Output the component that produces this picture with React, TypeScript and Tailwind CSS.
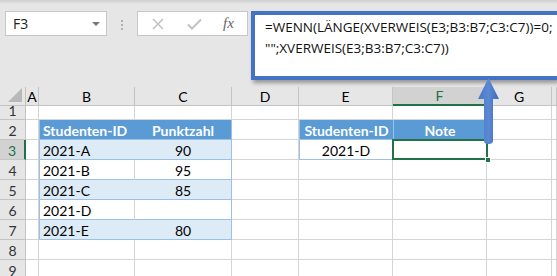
import React from "react";

const cols = ["A", "B", "C", "D", "E", "F", "G", ""];

type CellProps = {
  children?: React.ReactNode;
  className?: string;
};

function Cell({ children, className = "" }: CellProps) {
  return (
    <div className={`flex items-end overflow-hidden whitespace-nowrap pb-[1px] text-[14px] leading-none text-black ${className}`}>
      {children}
    </div>
  );
}

const grid = "border-r border-b border-[#d4d4d4] bg-white";
const band = "border-b border-[#9bc2e6] bg-[#ddebf7]";
const plain = "border-b border-[#9bc2e6] bg-white";
const head = "border-b border-[#9bc2e6] bg-[#5b9bd5] font-bold text-white";

function RowHead({ n, active }: { n: number; active?: boolean }) {
  return (
    <div
      className={`flex items-end justify-center border-b pb-[1px] text-[14px] leading-none ${
        active
          ? "border-r-2 border-b-[#c4c4c4] border-r-[#217346] bg-[#d2d2d2] text-[#217346]"
          : "border-r border-[#c4c4c4] bg-[#e6e6e6] text-[#333]"
      }`}
    >
      {n}
    </div>
  );
}

export default function App() {
  return (
    <div
      className="relative h-[276px] w-[557px] overflow-hidden bg-[#e6e6e6]"
      style={{ fontFamily: "Lato, 'Open Sans', sans-serif" }}
    >
      {/* toolbar */}
      <div className="h-[4px] bg-gradient-to-b from-[#cfcfcf] to-[#e6e6e6]" />
      <div className="flex h-[83px] items-start pl-[5px] pt-[7px]" style={{ fontFamily: "'Open Sans', sans-serif" }}>
        <div className="flex h-[25px] w-[102px] items-center justify-between border border-[#c6c6c6] bg-white pl-[7px] pr-[6px] text-[14px] text-[#222]">
          <span>F3</span>
          <span className="h-0 w-0 border-x-[4px] border-t-[4px] border-x-transparent border-t-[#777]" />
        </div>
        <div className="ml-[14px] mr-[14px] mt-[9px] flex flex-col gap-[2px]">
          <span className="h-[2px] w-[2px] bg-[#b0b0b0]" />
          <span className="h-[2px] w-[2px] bg-[#b0b0b0]" />
          <span className="h-[2px] w-[2px] bg-[#b0b0b0]" />
        </div>
        <div className="flex h-[25px] w-[111px] items-center border border-[#c6c6c6] bg-white">
          <svg className="ml-[14px]" width="12" height="12" viewBox="0 0 12 12">
            <path d="M1 1 L11 11 M11 1 L1 11" stroke="#c2c2c2" strokeWidth="1.6" />
          </svg>
          <svg className="ml-[23px]" width="15" height="12" viewBox="0 0 15 12">
            <path d="M1 6.5 L5 10.5 L14 1.5" stroke="#c2c2c2" strokeWidth="2" fill="none" />
          </svg>
          <span
            className="ml-[21px] text-[15px] italic text-[#666]"
            style={{ fontFamily: "'Liberation Serif', serif" }}
          >
            fx
          </span>
        </div>
        <div className="ml-[3px] h-[69px] flex-1 border-[4px] border-r-0 border-[#4472c4] bg-white pl-[10px] pt-[2px] text-[13.5px] leading-[21px] text-[#111] shadow-[2px_3px_4px_rgba(0,0,0,0.35)]">
          <div>=WENN(LÄNGE(XVERWEIS(E3;B3:B7;C3:C7))=0;</div>
          <div>"";XVERWEIS(E3;B3:B7;C3:C7))</div>
        </div>
      </div>

      {/* sheet */}
      <div className="grid grid-cols-[26px_13px_96px_97px_67px_94px_94px_65px_5px] grid-rows-[19px_14px_repeat(8,20px)]">
        {/* corner */}
        <div className="relative border-r border-b border-[#c4c4c4] bg-[#e6e6e6]">
          <span className="absolute bottom-[3px] right-[3px] h-0 w-0" style={{ borderBottom: "14px solid #b8b8b8", borderLeft: "14px solid transparent" }} />
        </div>
        {cols.map((c) => (
          <div
            key={c || "x"}
            className={`flex items-center justify-center pt-[1px] text-[14px] leading-none ${
              c === "F"
                ? "border-r border-b-2 border-r-[#c4c4c4] border-b-[#217346] bg-[#d2d2d2] text-[#217346]"
                : "border-r border-b border-[#c4c4c4] bg-[#e6e6e6] text-black"
            }`}
          >
            {c}
          </div>
        ))}

        {/* row 1 */}
        <RowHead n={1} />
        {cols.map((c) => (
          <Cell key={"r1" + c} className={grid} />
        ))}

        {/* row 2 */}
        <RowHead n={2} />
        <Cell className={grid} />
        <Cell className={`${head} border-l border-l-[#9bc2e6] pl-[3px]`}>Studenten-ID</Cell>
        <Cell className={`${head} justify-center border-r border-r-[#9bc2e6]`}>Punktzahl</Cell>
        <Cell className={grid} />
        <Cell className={`${head} justify-center border-l border-l-[#9bc2e6]`}>Studenten-ID</Cell>
        <Cell className={`${head} justify-center border-l border-l-[#9bc2e6] border-r border-r-[#9bc2e6]`}>Note</Cell>
        <Cell className={grid} />
        <Cell className={grid} />

        {/* rows 3-7 */}
        {[
          ["2021-A", "90"],
          ["2021-B", "95"],
          ["2021-C", "85"],
          ["2021-D", ""],
          ["2021-E", "80"],
        ].map(([id, pts], i) => {
          const row = i + 3;
          const banded = i % 2 === 0;
          return (
            <React.Fragment key={id}>
              <RowHead n={row} active={row === 3} />
              <Cell className={grid} />
              <Cell
                className={`${banded ? band : plain} border-l border-l-[#9bc2e6] pl-[3px] ${
                  banded ? "" : "border-r border-r-[#d4d4d4]"
                }`}
              >
                {id}
              </Cell>
              <Cell className={`${banded ? band : plain} justify-center border-r border-r-[#9bc2e6]`}>{pts}</Cell>
              <Cell className={grid} />
              {row === 3 ? (
                <>
                  <Cell className="justify-center border-b border-l border-r border-[#9bc2e6] bg-white">2021-D</Cell>
                  <div className="relative border-r border-b border-[#d4d4d4] bg-white">
                    <div className="absolute inset-[-1px] right-[-2px] border-2 border-[#217346]" />
                    <div className="absolute bottom-[-4px] right-[-5px] h-[6px] w-[6px] border border-white bg-[#217346]" />
                  </div>
                </>
              ) : (
                <>
                  <Cell className={grid} />
                  <Cell className={grid} />
                </>
              )}
              <Cell className={grid} />
              <Cell className={grid} />
            </React.Fragment>
          );
        })}

        {/* rows 8-9 */}
        {[8, 9].map((r) => (
          <React.Fragment key={r}>
            <RowHead n={r} />
            {cols.map((c) => (
              <Cell key={r + c} className={grid} />
            ))}
          </React.Fragment>
        ))}
      </div>

      {/* arrow */}
      <svg className="absolute left-[476px] top-[77px]" width="26" height="70" viewBox="0 0 26 70">
        <defs>
          <linearGradient id="shaft" x1="0" x2="1" y1="0" y2="0">
            <stop offset="0" stopColor="#4a78c6" />
            <stop offset="0.5" stopColor="#5a88d4" />
            <stop offset="1" stopColor="#3f6bb8" />
          </linearGradient>
        </defs>
        <path d="M12.5 1 L23 22 L17 22 L17 64 Q17 67 12.5 67 Q8 67 8 64 L8 22 L2 22 Z" fill="url(#shaft)" />
      </svg>
    </div>
  );
}
